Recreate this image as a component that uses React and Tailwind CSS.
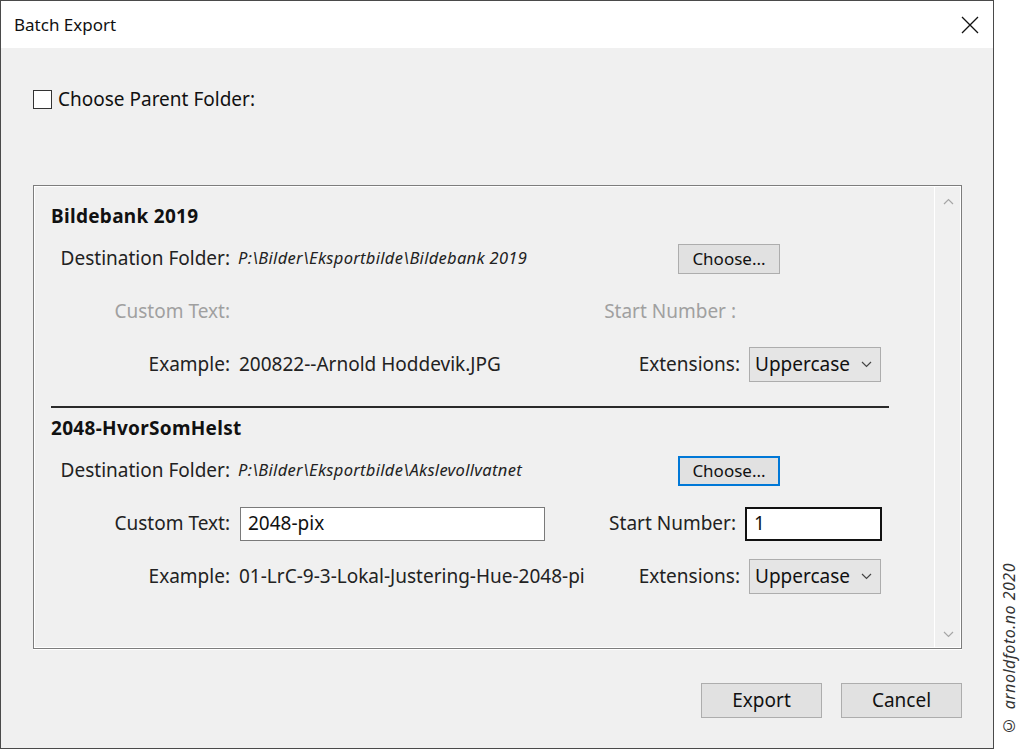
import React from 'react';

const font = { fontFamily: '"Noto Sans", "Open Sans", sans-serif' };

const Chevron = ({ className = '' }) => (
  <svg width="11" height="7" viewBox="0 0 11 7" className={className}>
    <path d="M1 1l4.5 4.5L10 1" fill="none" stroke="currentColor" strokeWidth="1.2" />
  </svg>
);

const Select = ({ value }) => (
  <div className="ml-[9px] w-[132px] h-[35px] flex items-center justify-between pl-[5px] pr-[8px] bg-[#e5e5e5] border border-[#adadad] text-[19px] text-[#111]">
    <span>{value}</span>
    <Chevron className="text-[#444]" />
  </div>
);

const Button = ({ children, focused, className = '' }) => (
  <div
    className={
      'flex items-center justify-center bg-[#e1e1e1] text-[#111] ' +
      (focused ? 'border-2 border-[#0078d7] ' : 'border border-[#adadad] ') +
      className
    }
  >
    {children}
  </div>
);

const Section = ({ title, path, enabled, customText, startNumber, example }) => (
  <div>
    <div className="h-[24px] mb-[4px] flex items-center font-bold text-[19px] tracking-[0.3px] text-[#111]">
      {title}
    </div>
    <div className="h-[53px] flex items-center">
      <div className="w-[179px] text-right text-[19px] text-[#222]">Destination Folder:</div>
      <div className="ml-[8px] w-[440px] italic text-[16.5px] tracking-[0.3px] text-[#222]">{path}</div>
      <Button focused={enabled} className="w-[102px] h-[30px] text-[17px]">
        Choose...
      </Button>
    </div>
    <div className="h-[53px] flex items-center">
      <div className={'w-[179px] text-right text-[19px] ' + (enabled ? 'text-[#222]' : 'text-[#a0a0a0]')}>
        Custom Text:
      </div>
      {enabled ? (
        <div className="ml-[10px] w-[305px] h-[34px] flex items-center px-[7px] bg-white border border-[#7a7a7a] text-[19px] text-[#111]">
          {customText}
        </div>
      ) : (
        <div className="ml-[10px] w-[305px]" />
      )}
      <div className={'w-[191px] text-right text-[19px] ' + (enabled ? 'text-[#222]' : 'text-[#a0a0a0]')}>
        {enabled ? 'Start Number:' : 'Start Number :'}
      </div>
      {enabled && (
        <div className="ml-[9px] w-[137px] h-[34px] flex items-center px-[7px] bg-white border-2 border-[#111] text-[19px] text-[#111]">
          {startNumber}
        </div>
      )}
    </div>
    <div className="h-[53px] flex items-center">
      <div className="w-[179px] text-right text-[19px] text-[#222]">Example:</div>
      <div className="ml-[9px] w-[351px] whitespace-nowrap text-[19px] text-[#222]">{example}</div>
      <div className="w-[150px] text-right text-[19px] text-[#222]">Extensions:</div>
      <Select value="Uppercase" />
    </div>
  </div>
);

export default function App() {
  return (
    <div className="w-[1024px] h-[750px] bg-white flex overflow-hidden" style={font}>
      <div className="w-[994px] h-[749px] border border-[#4a4a4a] flex flex-col bg-[#f0f0f0]">
        {/* title bar */}
        <div className="h-[47px] bg-white flex items-center justify-between pl-[13px] pr-[14px] shrink-0">
          <span className="text-[17px] text-[#111]">Batch Export</span>
          <svg width="18" height="18" viewBox="0 0 18 18">
            <path d="M1 1l16 16M17 1L1 17" stroke="#111" strokeWidth="1.3" />
          </svg>
        </div>

        <div className="flex-1 flex flex-col pl-[32px] pr-[32px]">
          {/* parent folder */}
          <div className="mt-[41px] h-[20px] flex items-center">
            <div className="w-[19px] h-[19px] border border-[#333] bg-white" />
            <span className="ml-[6px] text-[19px] text-[#111]">Choose Parent Folder:</span>
          </div>

          {/* scroll panel */}
          <div className="mt-[76px] w-[929px] h-[464px] border border-[#7d7d7d] shadow-[inset_1px_1px_0_#fff,inset_-1px_-1px_0_#fff,0_1px_0_#fff] flex">
            <div className="w-[900px] pl-[17px] pt-[18px]">
              <Section
                title="Bildebank 2019"
                path="P:\Bilder\Eksportbilde\Bildebank 2019"
                enabled={false}
                example="200822--Arnold Hoddevik.JPG"
              />
              <div className="mt-[15px] w-[838px] h-[2px] bg-[#2a2a2a]" />
              <div className="mt-[8px]">
                <Section
                  title="2048-HvorSomHelst"
                  path="P:\Bilder\Eksportbilde\Akslevollvatnet"
                  enabled
                  customText="2048-pix"
                  startNumber="1"
                  example="01-LrC-9-3-Lokal-Justering-Hue-2048-pi"
                />
              </div>
            </div>
            <div className="ml-auto w-[27px] border-l border-white flex flex-col items-center justify-between pt-[12px] pb-[10px] text-[#a6a6a6]">
              <Chevron className="rotate-180" />
              <Chevron />
            </div>
          </div>

          {/* footer buttons */}
          <div className="mt-[34px] w-[929px] flex justify-end gap-[19px]">
            <Button className="w-[121px] h-[35px] text-[19px]">Export</Button>
            <Button className="w-[121px] h-[35px] text-[19px]">Cancel</Button>
          </div>
        </div>
      </div>

      <div className="flex-1 flex flex-col justify-end items-center pb-[14px]">
        <div className="[writing-mode:vertical-rl] rotate-180 italic text-[16px] tracking-[0.5px] text-[#333]">
          © arnoldfoto.no 2020
        </div>
      </div>
    </div>
  );
}
